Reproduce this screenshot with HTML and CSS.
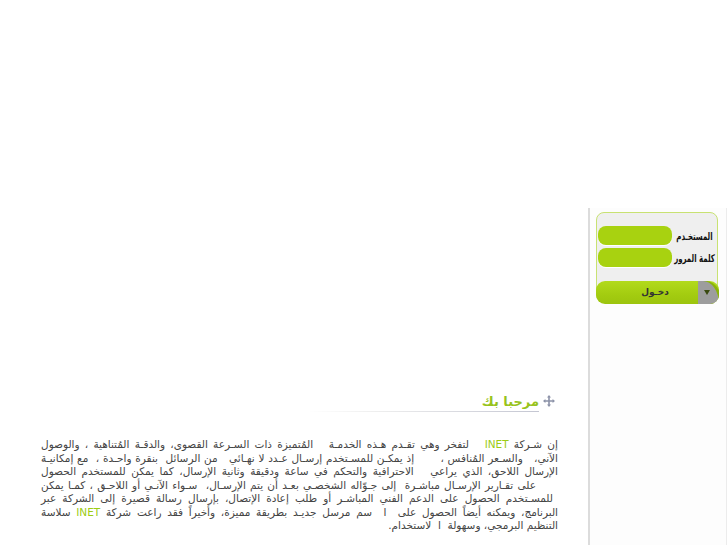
FILE: index.html
```
<!DOCTYPE html>
<html lang="ar" dir="rtl">
<head>
<meta charset="utf-8">
<link rel="stylesheet" href="styles.css">
</head>
<body>
<div class="page">
  <div class="top"></div>
  <div class="row">
    <aside class="side">
      <div class="login">
        <div class="field">
          <span class="lbl"><span class="lbl-t">المستخـدم</span></span>
          <span class="pill"></span>
        </div>
        <div class="field">
          <span class="lbl"><span class="lbl-t">كلمة المرور</span></span>
          <span class="pill"></span>
        </div>
        <div class="btn">
          <span class="arrow"><span class="tri"></span></span>
          <span class="btn-text">دخـول</span>
        </div>
      </div>
    </aside>
    <main class="main">
      <div class="heading">
        <svg class="ico" width="12" height="12" viewBox="0 0 12 12">
          <path d="M6 1.5V10.5M1.5 6H10.5" stroke="#8c92a8" stroke-width="1.6"/>
          <path d="M6 0L8 2.4H4Z M6 12L8 9.6H4Z M0 6L2.4 4V8Z M12 6L9.6 4V8Z" fill="#8c92a8"/>
        </svg>
        <div class="title"><span>مرحبا بك</span></div>
      </div>
      <div class="text">
        <span class="ln">إن شـركة <b class="inet">INET</b> &nbsp; لتفخر وهي تقـدم هـذه الخدمـة &nbsp; المُتميزة ذات السـرعة القصوى، والدقـة المُتناهية ، والوصول</span>
        <span class="ln">الآني، &nbsp; والسـعر المُنافس ، &nbsp; &nbsp; &nbsp; إذ يمكـن للمسـتخدم إرسـال عـدد لا نهـائي &nbsp; من الرسائل &nbsp;بنقرة واحـدة ، &nbsp;مع إمكانيـة</span>
        <span class="ln">الإرسال اللاحق، الذي يراعي &nbsp; الاحترافية والتحكم في ساعة ودقيقة وثانية الإرسال، كما يمكن للمستخدم الحصول</span>
        <span class="ln in1">على تقـارير الإرسـال مباشـرة &nbsp;إلى جـوّاله الشخصـي بعـد أن يتم الإرسـال، &nbsp;سـواء الآنـي أو اللاحـق ، كمـا يمكن</span>
        <span class="ln in2">للمسـتخدم الحصول على الدعم الفني المباشـر أو طلب إعادة الإتصال، بإرسال رسالة قصيرة إلى الشركة عبر</span>
        <span class="ln">البرنامج، ويمكنه أيضاً الحصول على &nbsp;ا &nbsp;سم مرسل جديـد بطريقة مميزة، وأخيراً فقد راعت شركة <b class="inet">INET</b> سلاسة</span>
        <span class="ln last">التنظيم البرمجي، وسهولة &nbsp;ا &nbsp;لاستخدام.</span>
      </div>
    </main>
  </div>
</div>
</body>
</html>
```
FILE: styles.css
```
html, body {
  margin: 0;
  padding: 0;
  background: #ffffff;
}
.page {
  width: 727px;
  height: 545px;
  overflow: hidden;
  font-family: "DejaVu Sans", sans-serif;
}
.top {
  height: 208px;
}
.row {
  display: flex;
  height: 337px;
}
.side {
  box-sizing: border-box;
  width: 139px;
  flex: none;
  border-left: 2px solid #dcdcdc;
  border-right: 1px solid #ececec;
  background: #fdfdfd;
  padding: 4px 8px 0 6px;
}
.login {
  height: 91px;
  box-sizing: border-box;
  border: 1.5px solid #c8e272;
  border-radius: 8px;
  background: #efefef;
  padding: 13px 0 0 0;
  display: flex;
  flex-direction: column;
}
.field {
  display: flex;
  align-items: center;
  height: 19px;
  margin-bottom: 3px;
  padding-left: 1px;
}
.lbl {
  flex: 1;
  min-width: 0;
  display: flex;
  justify-content: center;
  overflow: visible;
}
.lbl-t {
  display: inline-block;
  font-size: 10.5px;
  font-weight: bold;
  color: #111;
  white-space: nowrap;
  transform: scaleX(0.74);
  font-family: "DejaVu Sans Condensed", "DejaVu Sans", sans-serif;
}
.pill {
  flex: none;
  width: 74px;
  height: 19px;
  border-radius: 8px;
  background: #a8d210;
  box-shadow: 0 1px 0 #ffffff;
}
.btn {
  margin: auto -1.5px -1.5px -1.5px;
  height: 23px;
  border-radius: 9px;
  background: linear-gradient(#b2da1c, #a3cc10 60%, #9cc40e);
  display: flex;
  align-items: center;
  overflow: hidden;
}
.arrow {
  width: 21px;
  height: 23px;
  background: #9d9d9d;
  border-top-right-radius: 16px 23px;
  box-shadow: 3px 0 0 #8ab30a;
  display: flex;
  align-items: center;
  justify-content: center;
  margin-left: 3px;
}
.tri {
  width: 0;
  height: 0;
  border-left: 3.5px solid transparent;
  border-right: 3.5px solid transparent;
  border-top: 5px solid #3a4a10;
  margin-right: 2px;
}
.btn-text {
  flex: 1;
  text-align: center;
  font-size: 9px;
  font-weight: bold;
  color: #333;
  padding-left: 20px;
}
.main {
  flex: 1;
  padding: 181px 30px 0 41px;
}
.heading {
  display: flex;
  align-items: center;
  margin-right: 3px;
}
.ico {
  flex: none;
  margin-left: 4px;
}
.title {
  width: 230px;
  border-bottom: 1px solid;
  border-image: linear-gradient(to left, #c4c6d2, #eeeeee 70%, #ffffff) 1;
  padding-bottom: 1px;
  margin-top: 2px;
}
.title span {
  font-size: 13px;
  font-weight: bold;
  color: #98c31c;
  line-height: 16px;
}
.text {
  margin-top: 26px;
  font-size: 10.5px;
  line-height: 13.5px;
  color: #444;
}
.ln {
  display: block;
  text-align: justify;
  text-align-last: justify;
  white-space: nowrap;
}
.ln.last {
  text-align-last: right;
}
.in1 {
  padding-right: 22px;
}
.in2 {
  padding-right: 5px;
}
.inet {
  font-weight: normal;
  color: #9ccc14;
}
```
